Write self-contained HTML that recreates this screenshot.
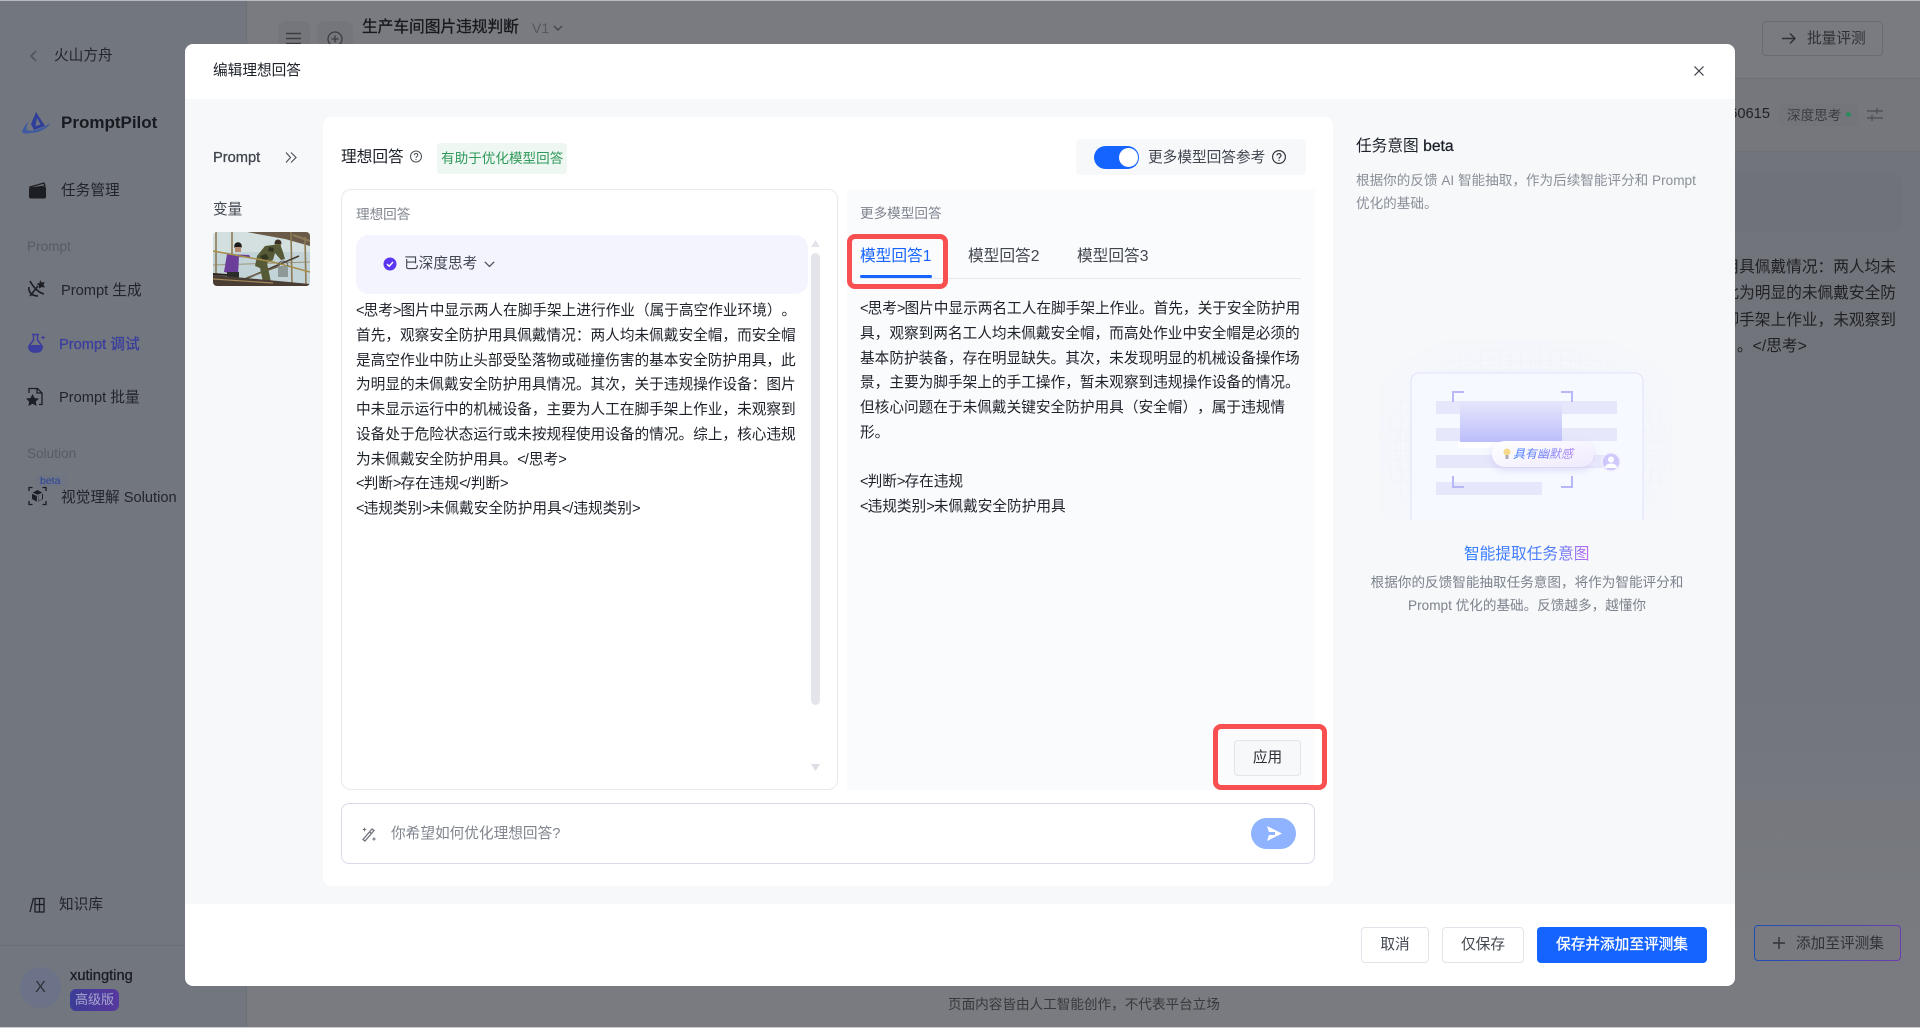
<!DOCTYPE html>
<html lang="zh-CN">
<head>
<meta charset="utf-8">
<title>编辑理想回答</title>
<style>
*{box-sizing:border-box;margin:0;padding:0}
html,body{width:1920px;height:1028px;overflow:hidden;background:#797b80}
body{position:relative;font-family:"Liberation Sans","Noto Sans CJK SC",sans-serif;font-size:14.67px;color:#1d2129;text-spacing-trim:space-all}
.b{position:absolute}
.t{position:absolute;white-space:nowrap;line-height:20px;transform:translateY(1px)}
.m{-webkit-text-stroke:.3px currentColor}
svg{position:absolute;overflow:visible}
.lines{position:absolute;white-space:nowrap;font-size:14.67px;line-height:24.75px;color:#1d2129;transform:translateY(1px)}
.lines i{font-style:normal;letter-spacing:-1px}
</style>
</head>
<body>
<!-- dimmed page behind -->
<div class="b" style="left:1696px;top:79px;width:224px;height:72px;background:#75777d"></div>
<div class="b" style="left:1696px;top:152px;width:224px;height:876px;background:linear-gradient(#71747b,#72757c 60%,#797b80 90%)"></div>
<div class="b" style="left:0;top:0;width:247px;height:1028px;background:#72767e;border-right:1px solid #6e7175"></div>
<div class="b" style="left:0;top:945px;width:247px;height:1px;background:#6a6e75"></div>
<div class="b" style="left:1696px;top:78px;width:224px;height:1px;background:#6f7176"></div>
<div class="b" style="left:1696px;top:151px;width:224px;height:1px;background:#6e7076"></div>
<div class="b" style="left:1696px;top:173px;width:206px;height:58px;background:#6f727a;border-radius:10px"></div>

<svg style="left:28px;top:50px" width="12" height="12" viewBox="0 0 12 12" fill="none" stroke="#50535a" stroke-width="1.6"><path d="M8 1 3 6l5 5"/></svg>
<div class="t" style="left:54px;top:45px;color:#24262b">火山方舟</div>

<svg style="left:22px;top:111px" width="29" height="23" viewBox="0 0 29 23"><path fill-rule="evenodd" d="M14 1 23 15 12 19 9 13zM15 7l3.500 6.500-5 1.500z" fill="#2f3f9a"/><path d="M0 21C1 17 4 13 7 10 5 14 4 17 5 19c5 2 15-1 23-7-1 4-10 10-19 10-4 1-8 1-9-1z" fill="#3f5a9f"/></svg>
<div class="t" style="left:61px;top:112px;font-size:17px;font-weight:700;color:#181a20">PromptPilot</div>

<svg style="left:28px;top:182px" width="19" height="17" viewBox="0 0 19 17"><path d="M2 5 16 1l1 3-14 2z" fill="none" stroke="#1c1e24" stroke-width="1.3"/><path d="M1 7c0-1 1-2 2-2h14c1 0 1 1 1 2v8c0 1-1 1.500-2 1.500H3c-1 0-2-.5-2-1.500z" fill="#1c1e24"/></svg>
<div class="t" style="left:61px;top:180px;color:#22242a">任务管理</div>

<div class="t" style="left:27px;top:236px;font-size:13.6px;color:#575b63">Prompt</div>

<svg style="left:27px;top:279px" width="19" height="19" viewBox="0 0 19 19" fill="none" stroke="#1c1e24" stroke-width="1.6"><path d="M3 17 11 7"/><path d="M3 2c3 6 9 12 14 13M2 8c-1 5 3 9 9 9"/><path d="m13 1 1.500 2.500L17.500 3l-1 3 1.500 2.500-3-.5L12 9.500 12 6.500 9.500 5l3-1z" fill="#1c1e24" stroke="none"/></svg>
<div class="t" style="left:61px;top:280px;color:#22242a">Prompt 生成</div>

<svg style="left:27px;top:333px" width="19" height="20" viewBox="0 0 19 20"><path d="M5 1.500h7M6.500 2v5L2 13a5 5 0 0 0 4 6h5a5 5 0 0 0 4-6l-4.500-6V2" fill="none" stroke="#3b3e9c" stroke-width="1.500"/><path d="M1.500 12h14c1 4-1 7-5 7H6c-3 0-5-3-4.500-7z" fill="#3b3e9c"/><path d="m16 2 .7 1.800 1.800.7-1.800.7L16 7l-.7-1.800-1.800-.7 1.800-.7z" fill="#3b3e9c"/></svg>
<div class="t m" style="left:59px;top:334px;color:#3b3f9e">Prompt 调试</div>

<svg style="left:26px;top:387px" width="18" height="19" viewBox="0 0 18 19"><path d="M3 6V1.500h8.500L16 6v11.500h-3" fill="none" stroke="#1c1e24" stroke-width="1.300"/><path d="M11 1.500V6h5" fill="none" stroke="#1c1e24" stroke-width="1.300"/><path d="m6.500 7 2 4 4.500.6-3.300 3 .9 4.400-4.100-2.200L2.400 19l.8-4.400L0 11.600 4.500 11z" fill="#1c1e24"/></svg>
<div class="t" style="left:59px;top:387px;color:#22242a">Prompt 批量</div>

<div class="t" style="left:27px;top:443px;font-size:13.6px;color:#575b63">Solution</div>
<div class="b" style="left:36px;top:475px;width:31px;height:11px;background:#6e7481;border-radius:2px"></div>
<div class="t" style="left:40px;top:470px;font-size:10.500px;color:#2a459c">beta</div>
<svg style="left:28px;top:486px" width="19" height="20" viewBox="0 0 19 20" fill="none" stroke="#1c1e24" stroke-width="1.300"><path d="M1 5V1.500h3.500M14.500 1.500H18V5M18 15v3.500h-3.500M4.500 18.500H1V15"/><path d="M9.500 4 15 7v6l-5.500 3L4 13V7z" fill="#1c1e24" stroke="none"/><path d="M9.500 9.500V16M15 7 9.500 9.500 4 7" stroke="#72767e"/><path d="M10.500 10v5l3.500-2V8z" fill="#72767e" stroke="none"/></svg>
<div class="t" style="left:61px;top:487px;color:#22242a">视觉理解 Solution</div>

<svg style="left:29px;top:897px" width="16" height="16" viewBox="0 0 16 16" fill="none" stroke="#1c1e24" stroke-width="1.300"><path d="M4.500 1 1 15"/><path d="M6 1.500h9v13.500H6zM10.500 1.500V15M6 7.500h9"/></svg>
<div class="t" style="left:59px;top:894px;color:#22242a">知识库</div>

<div class="b" style="left:20px;top:967px;width:41px;height:41px;border-radius:50%;background:#6c7388"></div>
<div class="t" style="left:20px;top:977px;width:41px;text-align:center;font-size:16px;color:#2d3036">X</div>
<div class="t m" style="left:70px;top:965px;color:#1b1d22">xutingting</div>
<div class="b" style="left:70px;top:989px;width:49px;height:22px;border-radius:6px;background:linear-gradient(90deg,#3c3c96,#57389f)"></div>
<div class="t" style="left:75px;top:989px;font-size:13px;color:#a8a6cf">高级版</div>

<div class="b" style="left:278px;top:21px;width:32px;height:40px;border-radius:8px;background:#74767b"></div>
<div class="b" style="left:317px;top:21px;width:36px;height:40px;border-radius:8px;background:#74767b"></div>
<svg style="left:286px;top:32px" width="15" height="14" viewBox="0 0 15 14" stroke="#3b3d42" stroke-width="1.400"><path d="M0 1.500h15M0 6.500h15M0 11.500h15"/></svg>
<svg style="left:327px;top:31px" width="16" height="16" viewBox="0 0 16 16" fill="none" stroke="#3b3d42" stroke-width="1.300"><circle cx="8" cy="8" r="7"/><path d="M8 4.500v7M4.500 8h7"/></svg>
<div class="t m" style="left:362px;top:17px;font-size:15.700px;color:#17191d">生产车间图片违规判断</div>
<div class="t" style="left:532px;top:17px;font-size:14px;color:#55585d">V1</div>
<svg style="left:553px;top:25px" width="10" height="6" viewBox="0 0 10 6" fill="none" stroke="#44474c" stroke-width="1.400"><path d="m1 1 4 4 4-4"/></svg>

<div class="b" style="left:1762px;top:21px;width:121px;height:35px;border:1px solid #6a6c71;border-radius:4px"></div>
<svg style="left:1781px;top:32px" width="16" height="13" viewBox="0 0 16 13" fill="none" stroke="#2e3035" stroke-width="1.400"><path d="M1 6.500h13M9 1.500l5 5-5 5"/></svg>
<div class="t" style="left:1807px;top:28px;color:#2e3035">批量评测</div>

<div class="t" style="right:150px;top:103px;font-size:14.67px;color:#1f2126">260615</div>
<div class="b" style="left:1779px;top:103px;width:79px;height:23px;background:#73757b;border-radius:3px"></div>
<div class="t" style="left:1787px;top:105px;font-size:13.600px;color:#3a3c42">深度思考</div>
<div class="b" style="left:1846px;top:112px;width:5px;height:5px;border-radius:50%;background:#2f8a5c"></div>
<svg style="left:1867px;top:107px" width="16" height="15" viewBox="0 0 16 15" fill="none" stroke="#4b4d52" stroke-width="1.200"><path d="M0 4h16M0 11h16M10 1v6M5 8v6"/></svg>

<div class="lines" style="left:1620px;top:254px;font-size:15.700px;line-height:26.400px;color:#1e2025;text-align:right;width:276px">佩戴安全防护用具佩戴情况：两人均未<br>全防护用具，此为明显的未佩戴安全防<br>工在脚手架上作业，未观察到</div>
<div class="t" style="left:1737px;top:336px;font-size:15.700px;color:#1e2025">。&lt;/思考&gt;</div>

<div class="b" style="left:1754px;top:925px;width:147px;height:36px;border-radius:4px;padding:1px;background:linear-gradient(90deg,#1d4fb3,#6a3cb0)"><div style="width:100%;height:100%;border-radius:3px;background:#787a80"></div></div>
<svg style="left:1773px;top:937px" width="12" height="12" viewBox="0 0 12 12" stroke="#303237" stroke-width="1.400"><path d="M6 0v12M0 6h12"/></svg>
<div class="t" style="left:1796px;top:933px;color:#303237">添加至评测集</div>

<div class="t" style="left:948px;top:994px;font-size:13.600px;color:#36383c">页面内容皆由人工智能创作，不代表平台立场</div>

<!-- modal -->
<div class="b" style="left:185px;top:44px;width:1550px;height:942px;background:#fff;border-radius:8px;overflow:hidden">
  <div class="b" style="left:0;top:55px;width:1550px;height:805px;background:#f6f8fa"></div>
</div>
<div class="t" style="left:213px;top:60px;color:#1d2129">编辑理想回答</div>
<svg style="left:1694px;top:66px" width="10" height="10" viewBox="0 0 10 10" stroke="#3a3d44" stroke-width="1.200"><path d="m.5.500 9 9M9.500.500l-9 9"/></svg>

<div class="t m" style="left:213px;top:147px;color:#41464f">Prompt</div>
<svg style="left:285px;top:152px" width="12" height="11" viewBox="0 0 12 11" fill="none" stroke="#4e535c" stroke-width="1.200"><path d="m1 .500 4.500 5L1 10.500M6 .500l5 5-5 5"/></svg>
<div class="t" style="left:213px;top:199px;color:#41464f">变量</div>

<svg style="left:213px;top:232px;border-radius:5px" width="97" height="54" viewBox="0 0 97 54">
  <defs><clipPath id="pc"><rect width="97" height="54" rx="4"/></clipPath></defs>
  <g clip-path="url(#pc)">
    <rect width="97" height="54" fill="#c3d4d8"/>
    <rect width="97" height="20" fill="#d4e0e0"/>
    <path d="M34 0h63v14L72 7 50 3z" fill="#6a5a48"/>
    <path d="M80 3 97 9" stroke="#8f7a5a" stroke-width="2"/>
    <g stroke="#8d7a55" stroke-width="1.600" fill="none">
      <path d="M3 0v46M19 0v54M78 0l1 54M92 5l1 49"/>
      <path d="M0 33 97 30" stroke-width="1" opacity=".7"/>
    </g>
    <path d="M30 48 86 24" stroke="#4a3d30" stroke-width="1.600"/>
    <path d="M33 46 67 34" stroke="#6e6248" stroke-width="1.200"/>
    <path d="M36 23 14 22l-3 18 14 3 1-18 12 1z" fill="#6b3e9c"/>
    <circle cx="25" cy="14" r="3.800" fill="#1b1b1b"/>
    <rect x="22" y="15" width="6" height="5" fill="#b58a70"/>
    <rect x="14" y="40" width="12" height="6" fill="#2a2d2a"/>
    <circle cx="65" cy="11" r="3.500" fill="#3a3025"/>
    <rect x="62" y="12" width="6" height="5" fill="#a47a5a"/>
    <path d="M44 24 52 14 67 12 70 20 72 27 68 28 62 21 60 28 54 31 58 50 50 50 47 36 42 34z" fill="#565a36"/>
    <path d="M47 24l6-2 3 4-5 3zM56 15l5 1-1 4-5-1z" fill="#32351f"/>
    <path d="M0 19 60 30 97 40" stroke="#a58c48" stroke-width="1.500" fill="none"/>
    <rect x="65" y="34" width="10" height="11" fill="#8d9a98"/>
    <path d="M65 34a5 5 0 0 1 10 0" fill="none" stroke="#555" stroke-width=".8"/>
    <path d="M0 43 97 52v2H0z" fill="#4a3d33"/>
    <path d="M0 47 60 51" stroke="#a38a5a" stroke-width="1.200"/>
    <path d="M0 42 14 43" stroke="#2a2520" stroke-width="2"/>
  </g>
</svg>

<!-- main white panel -->
<div class="b" style="left:323px;top:117px;width:1010px;height:769px;background:#fff;border-radius:8px"></div>
<div class="t" style="left:341px;top:147px;font-size:15.700px;color:#1d2129">理想回答</div>
<svg style="left:410px;top:150px" width="12" height="13" viewBox="0 0 12 12" fill="none" stroke="#4b4f57" stroke-width="1"><circle cx="6" cy="6" r="5.500"/><path d="M4.300 4.700c0-2.200 3.500-2.200 3.500 0 0 1.300-1.800 1.300-1.800 2.800M6 8.500v1"/></svg>
<div class="b" style="left:437px;top:143px;width:130px;height:31px;background:#eef7f1;border-radius:3px"></div>
<div class="t" style="left:441px;top:148px;font-size:13.600px;color:#2f9a5b">有助于优化模型回答</div>

<div class="b" style="left:1076px;top:139px;width:230px;height:36px;background:#f6f8fa;border-radius:4px"></div>
<div class="b" style="left:1094px;top:146px;width:45px;height:23px;background:#1664ff;border-radius:12px"></div>
<div class="b" style="left:1119px;top:148px;width:19px;height:19px;background:#fff;border-radius:50%"></div>
<div class="t" style="left:1148px;top:147px;color:#41464f">更多模型回答参考</div>
<svg style="left:1272px;top:150px" width="14" height="14" viewBox="0 0 14 14" fill="none" stroke="#33373e" stroke-width="1.200"><circle cx="7" cy="7" r="6.400"/><path d="M5 5.500c0-2.500 4-2.500 4 0 0 1.500-2 1.500-2 3.200M7 9.700v1.200"/></svg>

<!-- left card -->
<div class="b" style="left:341px;top:189px;width:497px;height:601px;background:#fff;border:1px solid #e8e9ee;border-radius:10px"></div>
<div class="t" style="left:356px;top:204px;font-size:13.600px;color:#7f848e">理想回答</div>
<div class="b" style="left:356px;top:235px;width:452px;height:59px;background:#f3f4fe;border-radius:13px"></div>
<svg style="left:383px;top:257px" width="14" height="14" viewBox="0 0 14 14"><circle cx="7" cy="7" r="6.500" fill="#5b36f0"/><path d="m4 7.200 2.200 2L10 5" fill="none" stroke="#fff" stroke-width="1.400"/></svg>
<div class="t" style="left:404px;top:253px;color:#41464f">已深度思考</div>
<svg style="left:484px;top:261px" width="11" height="7" viewBox="0 0 11 7" fill="none" stroke="#4e535c" stroke-width="1.300"><path d="m.8.800 4.700 4.700L10.200.8"/></svg>
<div class="b" style="left:811px;top:253px;width:9px;height:452px;background:#e3e5ea;border-radius:5px"></div>
<svg style="left:811px;top:240px" width="9" height="7" viewBox="0 0 9 7"><path d="M4.500 0 9 7H0z" fill="#e3e5ea"/></svg>
<svg style="left:811px;top:764px" width="9" height="7" viewBox="0 0 9 7"><path d="M0 0h9L4.500 7z" fill="#dcdee3"/></svg>

<div class="lines" style="left:356px;top:298px"><i>&lt;</i>思考<i>&gt;</i>图片中显示两人在脚手架上进行作业（属于高空作业环境）。<br>首先，观察安全防护用具佩戴情况：两人均未佩戴安全帽，而安全帽<br>是高空作业中防止头部受坠落物或碰撞伤害的基本安全防护用具，此<br>为明显的未佩戴安全防护用具情况。其次，关于违规操作设备：图片<br>中未显示运行中的机械设备，主要为人工在脚手架上作业，未观察到<br>设备处于危险状态运行或未按规程使用设备的情况。综上，核心违规<br>为未佩戴安全防护用具。<i>&lt;</i>/思考<i>&gt;</i><br><i>&lt;</i>判断<i>&gt;</i>存在违规<i>&lt;</i>/判断<i>&gt;</i><br><i>&lt;</i>违规类别<i>&gt;</i>未佩戴安全防护用具<i>&lt;</i>/违规类别<i>&gt;</i></div>

<!-- right card -->
<div class="b" style="left:847px;top:189px;width:468px;height:601px;background:#fafbfd"></div>
<div class="t" style="left:860px;top:203px;font-size:13.600px;color:#7f848e">更多模型回答</div>
<div class="t" style="left:860px;top:246px;font-size:15.700px;color:#1664ff">模型回答1</div>
<div class="t" style="left:968px;top:246px;font-size:15.700px;color:#41464f">模型回答2</div>
<div class="t" style="left:1077px;top:246px;font-size:15.700px;color:#41464f">模型回答3</div>
<div class="b" style="left:860px;top:278px;width:441px;height:1px;background:#e6e8ee"></div>
<div class="b" style="left:860px;top:275px;width:72px;height:3px;background:#1664ff;border-radius:2px"></div>
<div class="b" style="left:847px;top:234px;width:101px;height:55px;border:5px solid #f85050;border-radius:8px"></div>

<div class="lines" style="left:860px;top:296px"><i>&lt;</i>思考<i>&gt;</i>图片中显示两名工人在脚手架上作业。首先，关于安全防护用<br>具，观察到两名工人均未佩戴安全帽，而高处作业中安全帽是必须的<br>基本防护装备，存在明显缺失。其次，未发现明显的机械设备操作场<br>景，主要为脚手架上的手工操作，暂未观察到违规操作设备的情况。<br>但核心问题在于未佩戴关键安全防护用具（安全帽），属于违规情<br>形。<br><br><i>&lt;</i>判断<i>&gt;</i>存在违规<br><i>&lt;</i>违规类别<i>&gt;</i>未佩戴安全防护用具</div>

<div class="b" style="left:1234px;top:740px;width:67px;height:36px;background:#f6f8fa;border:1px solid #e3e5ea;border-radius:4px"></div>
<div class="t" style="left:1234px;top:747px;width:67px;text-align:center;color:#2b2e35">应用</div>
<div class="b" style="left:1213px;top:724px;width:114px;height:66px;border:5px solid #f85050;border-radius:8px"></div>

<!-- input -->
<div class="b" style="left:341px;top:803px;width:974px;height:61px;background:#fff;border:1px solid #dcd8e8;border-radius:8px"></div>
<svg style="left:361px;top:826px" width="16" height="17" viewBox="0 0 16 17" fill="none" stroke="#6d717a" stroke-width="1.300"><path d="m2 13.500 9-10.500 2 1.500-9 10.500z"/><path d="M8.500 6l2 1.600"/><path d="M3.500 1l.6 1.900 1.900.6-1.900.6-.6 1.900-.6-1.900L1 3.500l1.900-.6zM13 10.500l.6 1.900 1.900.6-1.900.6-.6 1.900-.6-1.900-1.900-.6 1.900-.6z" fill="#6d717a" stroke="none"/></svg>
<div class="t" style="left:391px;top:823px;color:#7f848d">你希望如何优化理想回答?</div>
<div class="b" style="left:1251px;top:818px;width:45px;height:31px;background:#8fb3ff;border-radius:16px"></div>
<svg style="left:1266px;top:826px" width="16" height="15" viewBox="0 0 16 15"><path d="M1 0 16 7.500 1 15l2-6h6V6H3z" fill="#fff"/></svg>

<!-- right column -->
<div class="t" style="left:1356px;top:136px;font-size:15.700px;color:#1d2129">任务意图 <span class="m">beta</span></div>
<div class="lines" style="left:1356px;top:169px;font-size:13.600px;line-height:22.500px;color:#8a8f98">根据你的反馈 AI 智能抽取，作为后续智能评分和 Prompt<br>优化的基础。</div>

<!-- illustration -->
<div class="b" style="left:1380px;top:340px;width:293px;height:180px;background-color:#f3f5fe;background-image:linear-gradient(#eceffb 1px,transparent 1px),linear-gradient(90deg,#eceffb 1px,transparent 1px);background-size:10px 10px;-webkit-mask-image:radial-gradient(ellipse 60% 70% at 50% 60%,#000 45%,transparent 100%);mask-image:radial-gradient(ellipse 60% 70% at 50% 60%,#000 45%,transparent 100%)"></div>
<svg style="left:1380px;top:340px" width="293" height="180" viewBox="1380 340 293 180">
  <defs>
    <linearGradient id="sg" x1="0" y1="0" x2="0" y2="1"><stop offset="0" stop-color="#e6e7fb"/><stop offset="1" stop-color="#bcbefb"/></linearGradient>
    <linearGradient id="bb" x1="0" y1="0" x2="1" y2="1"><stop offset="0" stop-color="#fff"/><stop offset="1" stop-color="#efeafe"/></linearGradient>
    <linearGradient id="bt" x1="0" y1="0" x2="1" y2="0"><stop offset="0" stop-color="#3f7eff"/><stop offset="1" stop-color="#b58cf5"/></linearGradient>
    <filter id="sh" x="-20%" y="-40%" width="140%" height="200%"><feDropShadow dx="0" dy="3" stdDeviation="4" flood-color="#b9b5f0" flood-opacity=".45"/></filter>
  </defs>
  <path d="M1411 520V381a8 8 0 0 1 8-8h216a8 8 0 0 1 8 8v139" fill="#f6f9ff" stroke="#e0e2fb"/>
  <g fill="#e6e7fb">
    <rect x="1436" y="401" width="181" height="13"/>
    <rect x="1436" y="428" width="181" height="13"/>
    <rect x="1436" y="455" width="181" height="13"/>
    <rect x="1436" y="482" width="106" height="13"/>
  </g>
  <rect x="1458" y="441" width="40" height="7" fill="#fff"/>
  <rect x="1460" y="401" width="102" height="41" fill="url(#sg)"/>
  <g fill="none" stroke="#b9b8f6" stroke-width="2">
    <path d="M1453 402v-10h11M1561 392h11v10M1453 476v11h11M1561 487h11v-11"/>
  </g>
  <path d="M1592 458l7 9-12-2z" fill="#f1edfe"/>
  <rect x="1492" y="441" width="102" height="26" rx="13" fill="url(#bb)" filter="url(#sh)"/>
  <circle cx="1507" cy="452" r="3.500" fill="#f6d98a"/>
  <rect x="1505.500" y="455" width="3" height="4" fill="#a9abb5"/>
  <text x="1513" y="458" font-size="12" font-style="italic" fill="url(#bt)" font-family="Liberation Sans,Noto Sans CJK SC,sans-serif">具有幽默感</text>
  <rect x="1595" y="455" width="16" height="12" fill="#e6e7fb" opacity=".7"/>
  <circle cx="1611" cy="462" r="9" fill="#cfc9fb" stroke="#f1f0ff" stroke-width="1.500"/>
  <circle cx="1611" cy="459.500" r="3" fill="#fff"/>
  <path d="M1605 468c0-6 12-6 12 0z" fill="#fff"/>
</svg>

<div class="t" style="left:1464px;top:544px;font-size:15.700px;background:linear-gradient(90deg,#2f7bff,#4f7cf7 70%,#c06cf0);-webkit-background-clip:text;background-clip:text;color:transparent">智能提取任务意图</div>
<div class="t" style="left:1327px;width:400px;text-align:center;top:572px;font-size:13.600px;color:#7d838d">根据你的反馈智能抽取任务意图，将作为智能评分和</div>
<div class="t" style="left:1327px;width:400px;text-align:center;top:595px;font-size:13.600px;color:#7d838d">Prompt 优化的基础。反馈越多，越懂你</div>

<!-- footer buttons -->
<div class="b" style="left:1361px;top:927px;width:68px;height:36px;background:#fff;border:1px solid #e0e3ea;border-radius:4px"></div>
<div class="t" style="left:1361px;top:934px;width:68px;text-align:center;color:#41464f">取消</div>
<div class="b" style="left:1442px;top:927px;width:82px;height:36px;background:#fff;border:1px solid #e0e3ea;border-radius:4px"></div>
<div class="t" style="left:1442px;top:934px;width:82px;text-align:center;color:#41464f">仅保存</div>
<div class="b" style="left:1537px;top:927px;width:170px;height:36px;background:#1664ff;border-radius:4px"></div>
<div class="t m" style="left:1537px;top:934px;width:170px;text-align:center;color:#fff">保存并添加至评测集</div>

<div class="b" style="left:0;top:0;width:1920px;height:1px;background:#b9babd"></div>
<div class="b" style="left:0;top:1027px;width:1920px;height:1px;background:#c9cacc"></div>
</body>
</html>
